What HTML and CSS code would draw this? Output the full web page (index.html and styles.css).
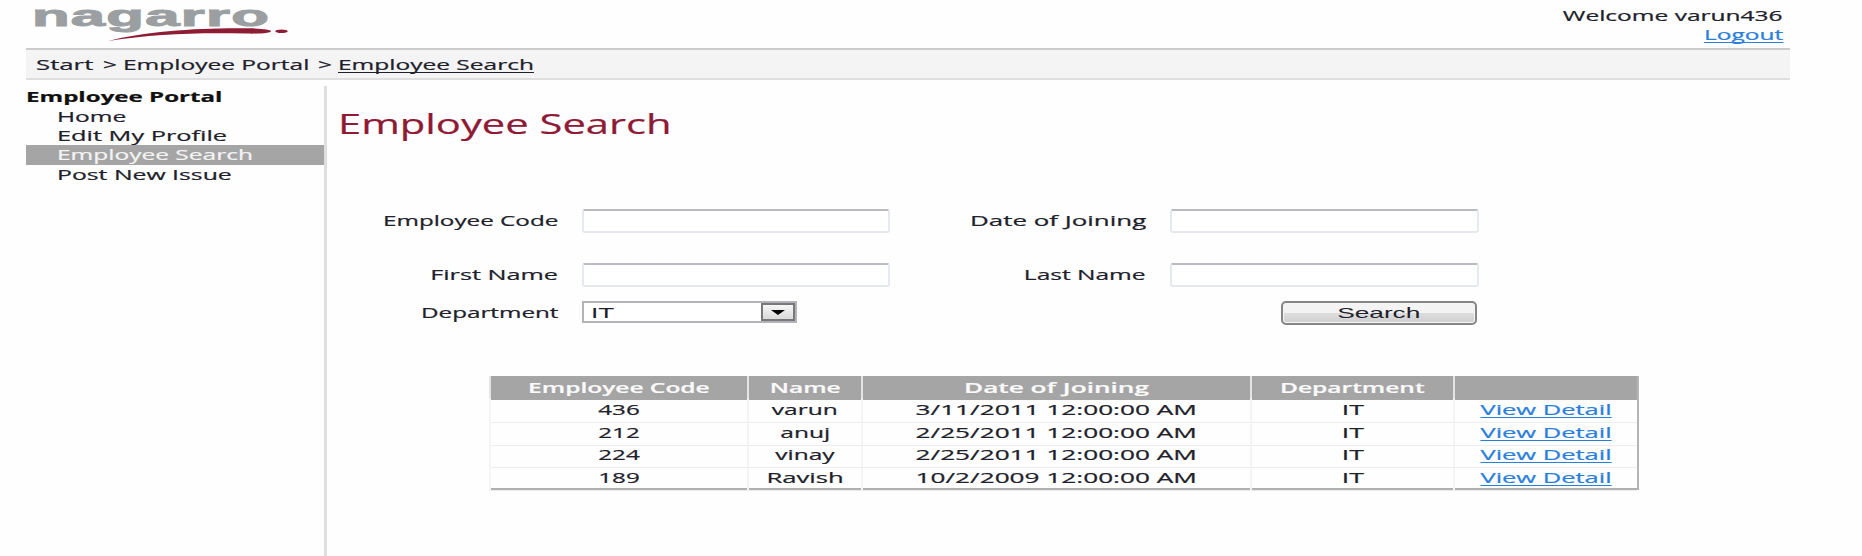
FILE: index.html
```html
<!DOCTYPE html>
<html lang="en">
<head>
<meta charset="utf-8">
<title>Employee Search</title>
<link rel="stylesheet" href="styles.css">
</head>
<body>
<div class="page">
  <header class="header">
    <svg class="logo" width="270" height="48" viewBox="0 0 270 48">
      <text class="logo-text" x="6" y="25.6" textLength="238" lengthAdjust="spacingAndGlyphs">nagarro</text>
      <path class="swoosh" d="M82 41 C120 31 175 27.6 222 28.3 C236 28.6 245 29.6 245 31.3 C245 33 234 33.9 221 33.6 C170 32.4 128 34 82 41 Z"/>
      <ellipse class="swoosh" cx="255.5" cy="31.3" rx="6.2" ry="1.8"/>
    </svg>
    <div class="user">
      <div><span class="t right">Welcome varun436</span></div>
      <div><a class="t right s-logout">Logout</a></div>
    </div>
  </header>
  <nav class="crumbs">
    <span class="t s-start">Start</span>
    <span class="t">&gt;</span>
    <span class="t">Employee Portal</span>
    <span class="t">&gt;</span>
    <span class="t u">Employee Search</span>
  </nav>
  <div class="main">
    <aside class="side">
      <div class="side-title"><span class="t s-title">Employee Portal</span></div>
      <div class="item"><span class="t">Home</span></div>
      <div class="item"><span class="t s-edit">Edit My Profile</span></div>
      <div class="item active"><span class="t">Employee Search</span></div>
      <div class="item"><span class="t s-post">Post New Issue</span></div>
    </aside>
    <section class="content">
      <h1><span class="t">Employee Search</span></h1>
      <form class="form">
        <label><span class="t right s-code">Employee Code</span></label>
        <div class="field"></div>
        <label><span class="t right s-doj">Date of Joining</span></label>
        <div class="field"></div>
        <label><span class="t right s-first">First Name</span></label>
        <div class="field"></div>
        <label><span class="t right">Last Name</span></label>
        <div class="field"></div>
        <label><span class="t right s-dept">Department</span></label>
        <div class="select"><span class="t s-opt">IT</span><span class="drop"><svg width="14" height="5" viewBox="0 0 14 5"><path d="M0 0H14L7 5Z"/></svg></span></div>
        <span></span>
        <div class="actions"><div class="button"><span class="t mid s-btn">Search</span></div></div>
      </form>
      <div class="grid">
        <div class="row head">
          <div><span class="t mid">Employee Code</span></div><div><span class="t mid">Name</span></div><div><span class="t mid s-hdoj">Date of Joining</span></div><div><span class="t mid">Department</span></div><div></div>
        </div>
        <div class="row">
          <div><span class="t mid s-num">436</span></div><div><span class="t mid">varun</span></div><div><span class="t mid s-date">3/11/2011 12:00:00 AM</span></div><div><span class="t mid s-it">IT</span></div><div><a class="t mid s-view">View Detail</a></div>
        </div>
        <div class="row">
          <div><span class="t mid s-num">212</span></div><div><span class="t mid">anuj</span></div><div><span class="t mid s-date">2/25/2011 12:00:00 AM</span></div><div><span class="t mid s-it">IT</span></div><div><a class="t mid s-view">View Detail</a></div>
        </div>
        <div class="row">
          <div><span class="t mid s-num">224</span></div><div><span class="t mid">vinay</span></div><div><span class="t mid s-date">2/25/2011 12:00:00 AM</span></div><div><span class="t mid s-it">IT</span></div><div><a class="t mid s-view">View Detail</a></div>
        </div>
        <div class="row">
          <div><span class="t mid s-num">189</span></div><div><span class="t mid s-ravish">Ravish</span></div><div><span class="t mid s-date">10/2/2009 12:00:00 AM</span></div><div><span class="t mid s-it">IT</span></div><div><a class="t mid s-view">View Detail</a></div>
        </div>
      </div>
    </section>
  </div>
</div>
</body>
</html>
```
FILE: styles.css
```css
* { box-sizing: border-box; }
body { margin: 0; background: #fefefe; color: #20202a; font: 14px/19.33px "Open Sans", "Noto Sans", sans-serif; }
.page { width: 1764px; height: 556px; margin-left: 26px; display: flex; flex-direction: column; overflow: hidden; }

/* Wide lettering: every run of text is stretched horizontally */
.t { display: inline-block; white-space: nowrap; transform: scaleX(var(--s, 1.75)); transform-origin: left; -webkit-text-stroke: .2px currentColor; }
.right { transform-origin: right; }
.mid { transform-origin: center; }
a, .u { text-decoration: underline; text-decoration-thickness: 1px; text-underline-offset: 2px; text-decoration-skip-ink: none; }
a { color: #2a7fdc; }

.header { height: 50px; flex: none; display: flex; justify-content: space-between; border-bottom: 2px solid #cbcbcb; }
.logo { display: block; overflow: visible; }
.logo-text { font: bold 29px/1 "Liberation Sans", Arial, sans-serif; letter-spacing: .6px; fill: #9b9fa1; stroke: #9b9fa1; stroke-width: 1px; }
.swoosh { fill: #8f1c35; }
.user { padding: 5.5px 7px 0 0; text-align: right; }

.crumbs { height: 30px; flex: none; display: grid; grid-template-columns: 67px 20px 194.5px 20px auto; align-items: center; padding: 2px 0 0 10px; background: #f4f4f4; border-bottom: 2px solid #dedede; }

.main { flex: 1; display: flex; padding-top: 6px; }
.side { width: 301px; flex: none; border-right: 3px solid #dedede; padding-top: 1.4px; }
.side-title { font-weight: 700; color: #111; }
.item { height: 19.33px; padding-left: 31px; line-height: 20.4px; }
.active { background: #a5a5a5; color: #f4f4f4; }

.content { flex: 1; padding-left: 12px; }
h1 { margin: 0; padding-top: 19px; height: 123px; font-size: 27px; line-height: 38px; font-weight: 400; color: #8e1a35; }
h1 .t { --s: 1.545; margin-left: -1px; }

.form { display: grid; grid-template-columns: 243px 308px 280px 309px; grid-template-rows: 54px 38px 74.6px; align-items: start; }
.form label { text-align: right; line-height: 24px; padding-right: 24px; }
.field { height: 24px; border: 2px solid #e6e8f0; border-top-color: #b9bac2; border-radius: 3px; background: #fff; }
.select { width: 215px; height: 22px; display: flex; justify-content: space-between; border: 2px solid #b4b4b8; background: #fff; font: 15px/19px "Liberation Sans", Arial, sans-serif; }
.select .s-opt { padding-left: 4px; -webkit-text-stroke: 0; }
.drop { width: 34px; display: flex; align-items: center; justify-content: center; border: 2px solid #77787a; background: linear-gradient(#f6f6f6, #dadada); }
.actions { display: flex; justify-content: flex-end; padding-right: 2px; }
.button { width: 196px; height: 24px; border: 2px solid #858585; border-radius: 5px; text-align: center; font: 15px/20px "Liberation Sans", Arial, sans-serif; background: linear-gradient(#f3f3f3 0 48%, #dedede 50%, #cfcfcf); box-shadow: inset 0 0 0 1px #f6f6f6; }
.button .s-btn { -webkit-text-stroke: 0; }

.grid { width: 1150px; margin-left: 150px; border-right: 2px solid #b5b5b5; border-bottom: 2px solid #b0b0b0; }
.row { display: grid; grid-template-columns: 258px 114px 389px 203px 184px; height: 22.5px; line-height: 24px; text-align: center; }
.row > div { border-left: 2px solid #f4f4f4; border-bottom: 1px solid #ededed; }
.head { line-height: 23px; }
.head > div { background: #a5a5a5; color: #fafafa; font-weight: 600; border-bottom-color: #a5a5a5; border-left-color: #e4e4e4; }

/* Stretch factors of single texts */
.s-start { --s: 1.84; }
.s-title { --s: 1.72; }
.s-edit { --s: 1.81; }
.s-post { --s: 1.77; }
.s-code { --s: 1.73; }
.s-dept { --s: 1.73; }
.s-first { --s: 1.8; }
.s-doj { --s: 1.85; }
.s-hdoj { --s: 1.87; }
.s-num { --s: 1.73; }
.s-it { --s: 1.9; }
.s-ravish { --s: 1.83; }
.s-date { --s: 1.87; }
.s-view { --s: 1.82; }
```
